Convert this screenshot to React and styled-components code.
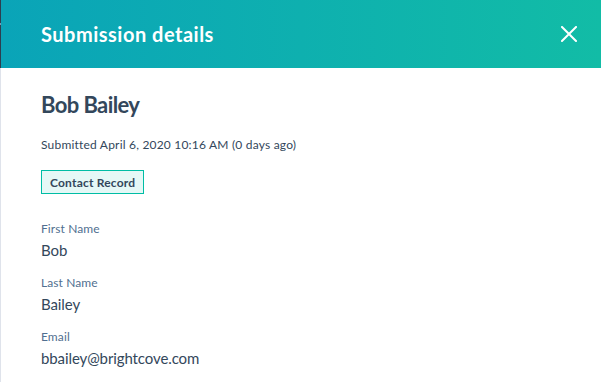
import React from "react";
import styled, { createGlobalStyle } from "styled-components";

const GlobalStyle = createGlobalStyle`
  html, body {
    margin: 0;
    padding: 0;
    background: #ffffff;
  }
  body {
    font-family: "Lato", "Open Sans", sans-serif;
    -webkit-font-smoothing: antialiased;
  }
`;

const fields = [
  { label: "First Name", value: "Bob" },
  { label: "Last Name", value: "Bailey" },
  { label: "Email", value: "bbailey@brightcove.com" },
];

const CloseIcon = () => (
  <svg width="16" height="16" viewBox="0 0 16 16" fill="none">
    <path
      d="M1 1 L15 15 M15 1 L1 15"
      stroke="#ffffff"
      strokeWidth="2"
      strokeLinecap="square"
    />
  </svg>
);

const App = () => {
  return (
    <>
      <GlobalStyle />
      <Screen>
        <PageEdge />
        <Panel>
          <Header>
            <HeaderTitle>Submission details</HeaderTitle>
            <CloseButton aria-label="Close">
              <CloseIcon />
            </CloseButton>
          </Header>
          <Body>
            <ContactName>Bob Bailey</ContactName>
            <Submitted>Submitted April 6, 2020 10:16 AM (0 days ago)</Submitted>
            <Tag>Contact Record</Tag>
            <FieldList>
              {fields.map((f) => (
                <Field key={f.label}>
                  <FieldLabel>{f.label}</FieldLabel>
                  <FieldValue>{f.value}</FieldValue>
                </Field>
              ))}
            </FieldList>
          </Body>
        </Panel>
      </Screen>
    </>
  );
};

const Screen = styled.div`
  display: flex;
  width: 601px;
  height: 382px;
  overflow: hidden;
`;

const PageEdge = styled.div`
  width: 1px;
  flex-shrink: 0;
  background: linear-gradient(
    to bottom,
    #2d3e50 0,
    #2d3e50 23px,
    #7c98b6 23px,
    #7c98b6 25px,
    #2d3e50 25px,
    #2d3e50 68px,
    #dfe3eb 68px
  );
`;

const Panel = styled.div`
  flex: 1;
  display: flex;
  flex-direction: column;
  background: #ffffff;
`;

const Header = styled.div`
  height: 68px;
  flex-shrink: 0;
  display: flex;
  align-items: center;
  justify-content: space-between;
  padding: 0 23px 0 40px;
  background-image: linear-gradient(to right, #0aa4b8, #12bca6);
`;

const HeaderTitle = styled.h1`
  margin: 0;
  font-size: 20px;
  font-weight: 700;
  color: #ffffff;
  letter-spacing: 0.5px;
`;

const CloseButton = styled.button`
  display: flex;
  align-items: center;
  justify-content: center;
  width: 18px;
  height: 18px;
  padding: 0;
  border: none;
  background: transparent;
  cursor: pointer;
`;

const Body = styled.div`
  display: flex;
  flex-direction: column;
  align-items: flex-start;
  padding: 22px 40px 0 40px;
`;

const ContactName = styled.h2`
  margin: 0;
  font-size: 22px;
  line-height: 30px;
  font-weight: 700;
  color: #33475b;
  letter-spacing: -0.6px;
`;

const Submitted = styled.div`
  margin-top: 16px;
  font-size: 12px;
  line-height: 18px;
  color: #33475b;
  letter-spacing: 0.2px;
`;

const Tag = styled.div`
  margin-top: 16px;
  height: 22px;
  display: flex;
  align-items: center;
  padding: 0 8px;
  border: 1px solid #00bda5;
  background: #e5f8f6;
  color: #33475b;
  font-size: 12px;
  font-weight: 700;
  letter-spacing: 0.2px;
`;

const FieldList = styled.div`
  margin-top: 26px;
  display: flex;
  flex-direction: column;
  gap: 13px;
`;

const Field = styled.div`
  display: flex;
  flex-direction: column;
`;

const FieldLabel = styled.div`
  font-size: 12px;
  line-height: 18px;
  color: #516f90;
  letter-spacing: 0.1px;
`;

const FieldValue = styled.div`
  margin-top: 1px;
  font-size: 15px;
  line-height: 22px;
  color: #33475b;
  letter-spacing: -0.1px;
`;

export default App;
